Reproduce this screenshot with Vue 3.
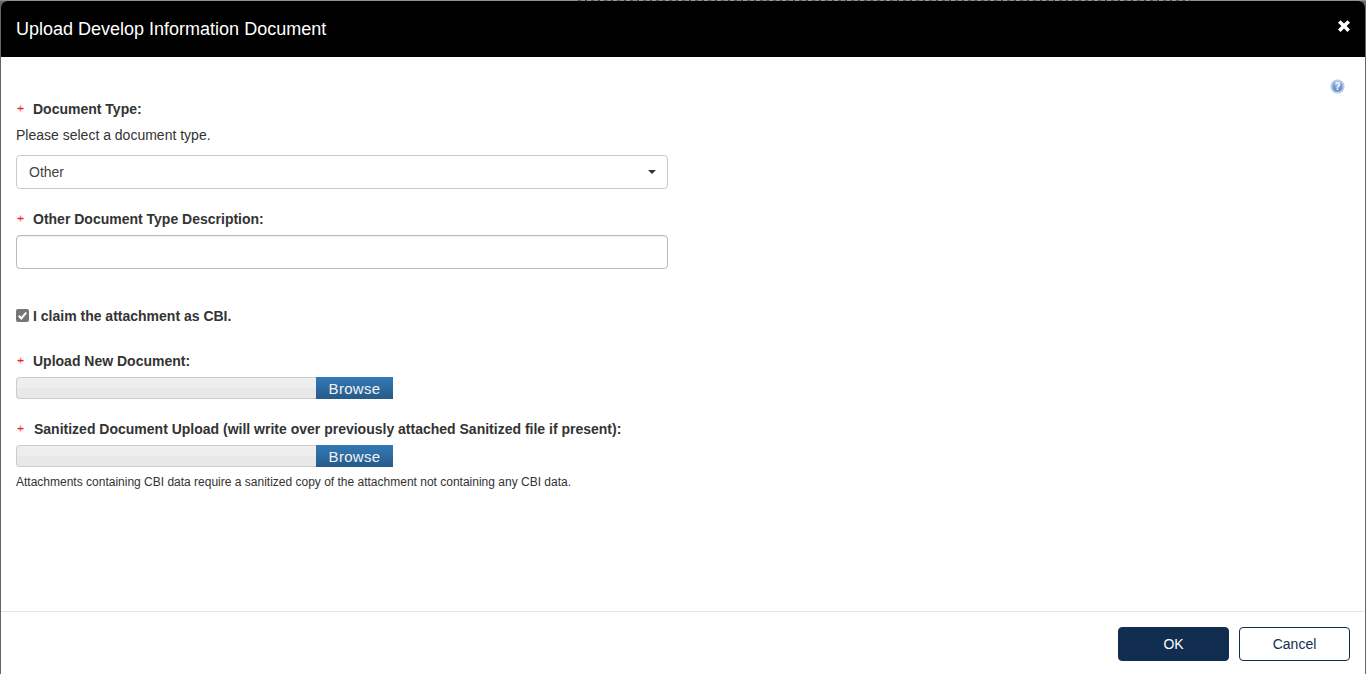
<script setup>
const uploads = [
  { id: 'new', label: 'Upload New Document:' },
  { id: 'san', label: 'Sanitized Document Upload (will write over previously attached Sanitized file if present):' }
]
</script>

<template>
  <div class="backdrop">
    <div class="ghost"></div>
    <div class="modal">
      <header class="head">
        <h1>Upload Develop Information Document</h1>
        <svg class="close" viewBox="0 0 14 14" width="14" height="14"><path d="M3.6 1.2 7 4.6 10.4 1.2 13 3.8 9.6 7.1 13 10.4 10.4 13 7 9.6 3.6 13 1 10.4 4.4 7.1 1 3.8Z" fill="#fff"/></svg>
      </header>
      <main class="body">
        <div class="help-row">
          <svg class="help" viewBox="0 0 15 15" width="15" height="15">
            <defs><radialGradient id="hg" cx="50%" cy="35%" r="65%"><stop offset="0" stop-color="#9fbce6"/><stop offset="1" stop-color="#4f7fc2"/></radialGradient></defs>
            <circle cx="7.5" cy="7.5" r="7" fill="#a9c1e2"/>
            <circle cx="7.5" cy="7.5" r="5.6" fill="url(#hg)" stroke="#dfe9f6" stroke-width=".8"/>
            <text x="7.5" y="11" text-anchor="middle" class="help-q">?</text>
          </svg>
        </div>
        <div class="label first"><span class="req"><svg viewBox="0 0 7 7" width="7" height="7"><path d="M3.5 0.5V6.5" stroke="#ff8298" stroke-width="1.5"/><path d="M0.5 3.6H6.5" stroke="#e8222b" stroke-width="1.5"/></svg></span>Document Type:</div>
        <p class="hint">Please select a document type.</p>
        <div class="field select">
          <span>Other</span>
          <i class="caret"></i>
        </div>
        <div class="label second"><span class="req"><svg viewBox="0 0 7 7" width="7" height="7"><path d="M3.5 0.5V6.5" stroke="#ff8298" stroke-width="1.5"/><path d="M0.5 3.6H6.5" stroke="#e8222b" stroke-width="1.5"/></svg></span>Other Document Type Description:</div>
        <div class="field input"></div>
        <div class="claim">
          <span class="check">
            <svg viewBox="0 0 13 13" width="13" height="13"><path d="M2.8 6.8 5.3 9.4 10.2 3.6" fill="none" stroke="#fff" stroke-width="2.1"/></svg>
          </span>
          <b>I claim the attachment as CBI.</b>
        </div>
        <template v-for="(u, i) in uploads" :key="u.id">
          <div class="label" :class="i === 0 ? 'up-a' : 'up-b'"><span class="req"><svg viewBox="0 0 7 7" width="7" height="7"><path d="M3.5 0.5V6.5" stroke="#ff8298" stroke-width="1.5"/><path d="M0.5 3.6H6.5" stroke="#e8222b" stroke-width="1.5"/></svg></span>{{ u.label }}</div>
          <div class="file">
            <div class="track"></div>
            <div class="browse">Browse</div>
          </div>
        </template>
        <p class="note">Attachments containing CBI data require a sanitized copy of the attachment not containing any CBI data.</p>
      </main>
      <footer class="foot">
        <button class="btn ok">OK</button>
        <button class="btn cancel">Cancel</button>
      </footer>
    </div>
  </div>
</template>

<style>
html, body { margin: 0; height: 100%; overflow: hidden; background: #666; }
</style>

<style scoped>
.backdrop {
  position: relative;
  height: 674px;
  overflow: hidden;
  background: linear-gradient(#8e8e8e 1px, #666 1px);
  padding: 1px 1px 0;
  box-sizing: border-box;
  font-family: "Liberation Sans", Arial, sans-serif;
  color: #333;
}
.ghost {
  position: absolute;
  top: 0;
  left: 578px;
  width: 612px;
  height: 1px;
  background: repeating-linear-gradient(90deg, #5a5a5a 0 3px, #8e8e8e 3px 7px, #444 7px 9px, #9a9a9a 9px 13px);
}
.modal {
  position: relative;
  height: 673px;
  background: #fff;
  border-radius: 6px 6px 0 0;
  overflow: hidden;
  display: flex;
  flex-direction: column;
}
.head {
  height: 56px;
  flex: none;
  background: #000;
  color: #fff;
  display: flex;
  align-items: center;
  justify-content: space-between;
  padding: 0 15px;
}
.head h1 { margin: 0; font-size: 18px; font-weight: 400; line-height: 56px; }
.close { margin-top: -6px; margin-right: -1px; }
.body { flex: 1; padding: 0 15px; min-height: 0; }
.help-row { display: flex; justify-content: flex-end; padding-top: 22px; height: 15px; padding-right: 5px; }
.help-q { font: bold 10px "Liberation Sans", sans-serif; fill: #fff; }
.label {
  font-size: 14px;
  font-weight: 700;
  line-height: 20px;
  display: flex;
  white-space: nowrap;
}
.req { width: 17px; flex: none; display: block; }
.req svg { display: block; margin-top: 6px; margin-left: 1px; }
.first { margin-top: 5px; }
.hint { margin: 6px 0 0; font-size: 14px; line-height: 20px; }
.field {
  box-sizing: border-box;
  width: 652px;
  height: 34px;
  border: 1px solid #ccc;
  border-radius: 4px;
  background: #fff;
}
.select {
  margin-top: 10px;
  display: flex;
  align-items: center;
  justify-content: space-between;
  padding: 0 12px;
  font-size: 14px;
  color: #444;
}
.caret { width: 0; height: 0; border-left: 4px solid transparent; border-right: 4px solid transparent; border-top: 4px solid #333; margin-right: -1px; }
.second { margin-top: 20px; }
.input { margin-top: 6px; border-color: #bbb; box-shadow: inset 0 1px 1px rgba(0,0,0,.075); }
.claim { margin-top: 37px; display: flex; align-items: center; height: 20px; font-size: 14px; }
.check { width: 13px; height: 13px; border-radius: 2px; background: #767676; margin-right: 4px; display: block; margin-top: -2px; }
.check svg { display: block; }
.up-a { margin-top: 25px; }
.up-b { margin-top: 20px; }
.up-b .req { width: 18px; }
.file { display: flex; margin-top: 6px; height: 22px; width: 377px; }
.track {
  box-sizing: border-box;
  width: 300px;
  border: 1px solid #ccc;
  border-right: 0;
  border-radius: 4px 0 0 4px;
  background: linear-gradient(#eeeeee 50%, #e8e8e8 50%);
}
.browse {
  width: 77px;
  background: linear-gradient(#337ab7, #265a88);
  color: #f2f2f2;
  font-size: 15px;
  letter-spacing: .3px;
  text-align: center;
  line-height: 24px;
}
.note { margin: 6px 0 0; font-size: 12px; line-height: 18px; }
.foot {
  flex: none;
  height: 47px;
  border-top: 1px solid #e5e5e5;
  display: flex;
  justify-content: flex-end;
  align-items: flex-start;
  gap: 10px;
  padding: 15px 15px 0;
}
.btn {
  width: 111px;
  height: 34px;
  border-radius: 4px;
  border: 1px solid #112e51;
  font: 14px "Liberation Sans", Arial, sans-serif;
  padding: 0;
}
.ok { background: #112e51; color: #fff; }
.cancel { background: #fff; color: #112e51; }
</style>
